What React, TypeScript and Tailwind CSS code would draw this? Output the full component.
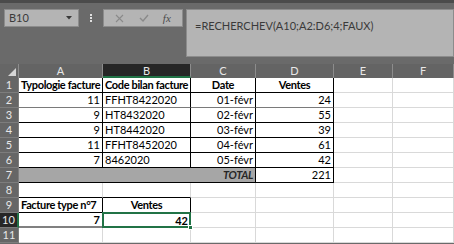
import React from 'react'

const font = { fontFamily: 'Lato, "Liberation Sans", sans-serif' }

const cols = ['A', 'B', 'C', 'D', 'E', 'F']

type Cell = {
  text?: string
  cls?: string
}

const bold = 'font-bold tracking-[-0.35px]'

// contenu des lignes 1 à 6 (A..F)
const rows: Cell[][] = [
  [
    { text: 'Typologie facture', cls: `${bold} text-left border-r-black border-b-black` },
    { text: 'Code bilan facture', cls: `${bold} text-left border-r-black border-b-black` },
    { text: 'Date', cls: `${bold} text-center border-r-black border-b-black` },
    { text: 'Ventes', cls: `${bold} text-center border-r-black border-b-black` },
    {},
    {},
  ],
  [
    { text: '11', cls: 'text-right border-r-black border-b-[#7a7a7a]' },
    { text: 'FFHT8422020', cls: 'text-left border-r-black border-b-[#7a7a7a]' },
    { text: '01-févr', cls: 'text-right border-r-black border-b-[#7a7a7a]' },
    { text: '24', cls: 'text-right border-r-black border-b-[#7a7a7a]' },
    {},
    {},
  ],
  [
    { text: '9', cls: 'text-right border-r-black border-b-black' },
    { text: 'HT8432020', cls: 'text-left border-r-black border-b-black' },
    { text: '02-févr', cls: 'text-right border-r-black border-b-black' },
    { text: '55', cls: 'text-right border-r-black border-b-black' },
    {},
    {},
  ],
  [
    { text: '9', cls: 'text-right border-r-black border-b-black' },
    { text: 'HT8442020', cls: 'text-left border-r-black border-b-black' },
    { text: '03-févr', cls: 'text-right border-r-black border-b-black' },
    { text: '39', cls: 'text-right border-r-black border-b-black' },
    {},
    {},
  ],
  [
    { text: '11', cls: 'text-right border-r-black border-b-black' },
    { text: 'FFHT8452020', cls: 'text-left border-r-black border-b-black' },
    { text: '04-févr', cls: 'text-right border-r-black border-b-black' },
    { text: '61', cls: 'text-right border-r-black border-b-black' },
    {},
    {},
  ],
  [
    { text: '7', cls: 'text-right border-r-black border-b-black' },
    { text: '8462020', cls: 'text-left border-r-black border-b-black' },
    { text: '05-févr', cls: 'text-right border-r-black border-b-black' },
    { text: '42', cls: 'text-right border-r-black border-b-black' },
    {},
    {},
  ],
]

function Blank({ cls = '' }: { cls?: string }) {
  return <div className={`border-r border-b border-[#d9d9d9] bg-white ${cls}`} />
}

function TableCell({ text, cls = '' }: Cell) {
  return (
    <div
      className={`border-r border-b border-[#d9d9d9] bg-white px-[2px] text-[11px] leading-[14px] text-black whitespace-nowrap overflow-hidden ${cls}`}
    >
      {text}
    </div>
  )
}

function RowHead({ n, active = false }: { n: number; active?: boolean }) {
  return (
    <div
      className={
        active
          ? 'border-b border-[#7a7a7a] border-r-2 border-r-[#217346] bg-[#262626] text-center text-[11px] leading-[14px] text-[#e8e8e8]'
          : 'border-b border-r border-[#7d7d7d] bg-[#666666] text-center text-[11px] leading-[14px] text-[#e8e8e8]'
      }
    >
      {n}
    </div>
  )
}

export default function App() {
  return (
    <div className="w-[454px] h-[244px] overflow-hidden bg-[#6a6a6a] select-none" style={font}>
      {/* barre de formule */}
      <div className="h-[64px] border-t-[3px] border-[#4b4b4b] flex items-start pt-[6px] pl-[4px]">
        <div className="w-[75px] h-[18px] bg-[#b4b4b4] border border-[#8c8c8c] flex items-center justify-between pl-[4px] pr-[6px]">
          <span className="text-[11px] text-[#3a3a3a]">B10</span>
          <svg width="6" height="4" viewBox="0 0 6 4">
            <path d="M0 0h6L3 3.5z" fill="#3a3a3a" />
          </svg>
        </div>
        <div className="w-[24px] h-[18px] flex flex-col items-center justify-center gap-[1px]">
          <span className="w-[2px] h-[2px] bg-[#e0e0e0]" />
          <span className="w-[2px] h-[2px] bg-[#e0e0e0]" />
          <span className="w-[2px] h-[2px] bg-[#e0e0e0]" />
        </div>
        <div className="w-[80px] h-[18px] bg-[#b4b4b4] border border-[#8c8c8c] flex items-center justify-around px-[4px]">
          <svg width="9" height="9" viewBox="0 0 9 9">
            <path d="M1 1l7 7M8 1l-7 7" stroke="#8a8a8a" strokeWidth="1.1" />
          </svg>
          <svg width="10" height="8" viewBox="0 0 10 8">
            <path d="M1 4l3 3 5-6" stroke="#8a8a8a" strokeWidth="1.4" fill="none" />
          </svg>
          <span className="text-[11px] italic text-[#4a4a4a] leading-none" style={{ fontFamily: '"Liberation Serif", serif' }}>
            fx
          </span>
        </div>
        <div className="ml-[3px] flex-1 h-[48px] bg-[#b4b4b4] border border-[#8c8c8c] pl-[8px] pt-[2px]">
          <span className="text-[11px] text-[#3a3a3a]">=RECHERCHEV(A10;A2:D6;4;FAUX)</span>
        </div>
      </div>

      {/* feuille */}
      <div className="grid grid-cols-[19px_84px_88px_65px_78px_59px_1fr] grid-rows-[14px_repeat(11,15px)]">
        <div className="bg-[#666666] border-r border-[#8c8c8c] flex items-end justify-end p-[2px]">
          <svg width="8" height="8" viewBox="0 0 8 8">
            <path d="M8 0v8H0z" fill="#d6d6d6" />
          </svg>
        </div>
        {cols.map((c) =>
          c === 'B' ? (
            <div key={c} className="bg-[#262626] border-b-2 border-[#217346] border-r border-r-[#8c8c8c] text-center text-[11px] leading-[13px] text-[#e8e8e8]">
              {c}
            </div>
          ) : (
            <div key={c} className="bg-[#646464] border-r border-[#8c8c8c] text-center text-[11px] leading-[14px] text-[#e8e8e8]">
              {c}
            </div>
          )
        )}

        {rows.map((r, i) => (
          <React.Fragment key={i}>
            <RowHead n={i + 1} />
            {r.map((cell, j) => (cell.text ? <TableCell key={j} {...cell} /> : <Blank key={j} />))}
          </React.Fragment>
        ))}

        {/* ligne 7 : total */}
        <RowHead n={7} />
        <div className={`col-span-3 bg-[#a6a6a6] border-r border-b border-black px-[2px] text-right text-[11px] leading-[14px] italic ${bold} text-[#262626]`}>
          TOTAL
        </div>
        <TableCell text="221" cls="text-right border-r-black border-b-black" />
        <Blank />
        <Blank />

        {/* ligne 8 */}
        <RowHead n={8} />
        <Blank cls="border-b-black" />
        <Blank cls="border-b-black" />
        <Blank />
        <Blank />
        <Blank />
        <Blank />

        {/* ligne 9 */}
        <RowHead n={9} />
        <TableCell text="Facture type n°7" cls={`${bold} text-left border-r-black border-b-black`} />
        <TableCell text="Ventes" cls={`${bold} text-center border-r-black border-b-black`} />
        <Blank />
        <Blank />
        <Blank />
        <Blank />

        {/* ligne 10 */}
        <RowHead n={10} active />
        <TableCell text="7" cls="font-bold text-right border-r-black border-b-[#808080] border-b-2" />
        <div className="relative bg-white border-2 border-[#217346] -mt-[1px] -ml-[1px] px-[1px] text-right text-[11px] leading-[13px] font-bold text-black">
          42
          <span className="absolute -right-[4px] -bottom-[4px] w-[5px] h-[5px] bg-[#217346] border border-white" />
        </div>
        <Blank />
        <Blank />
        <Blank />
        <Blank />

        {/* ligne 11 */}
        <RowHead n={11} />
        <Blank />
        <Blank />
        <Blank />
        <Blank />
        <Blank />
        <Blank />
      </div>
    </div>
  )
}
